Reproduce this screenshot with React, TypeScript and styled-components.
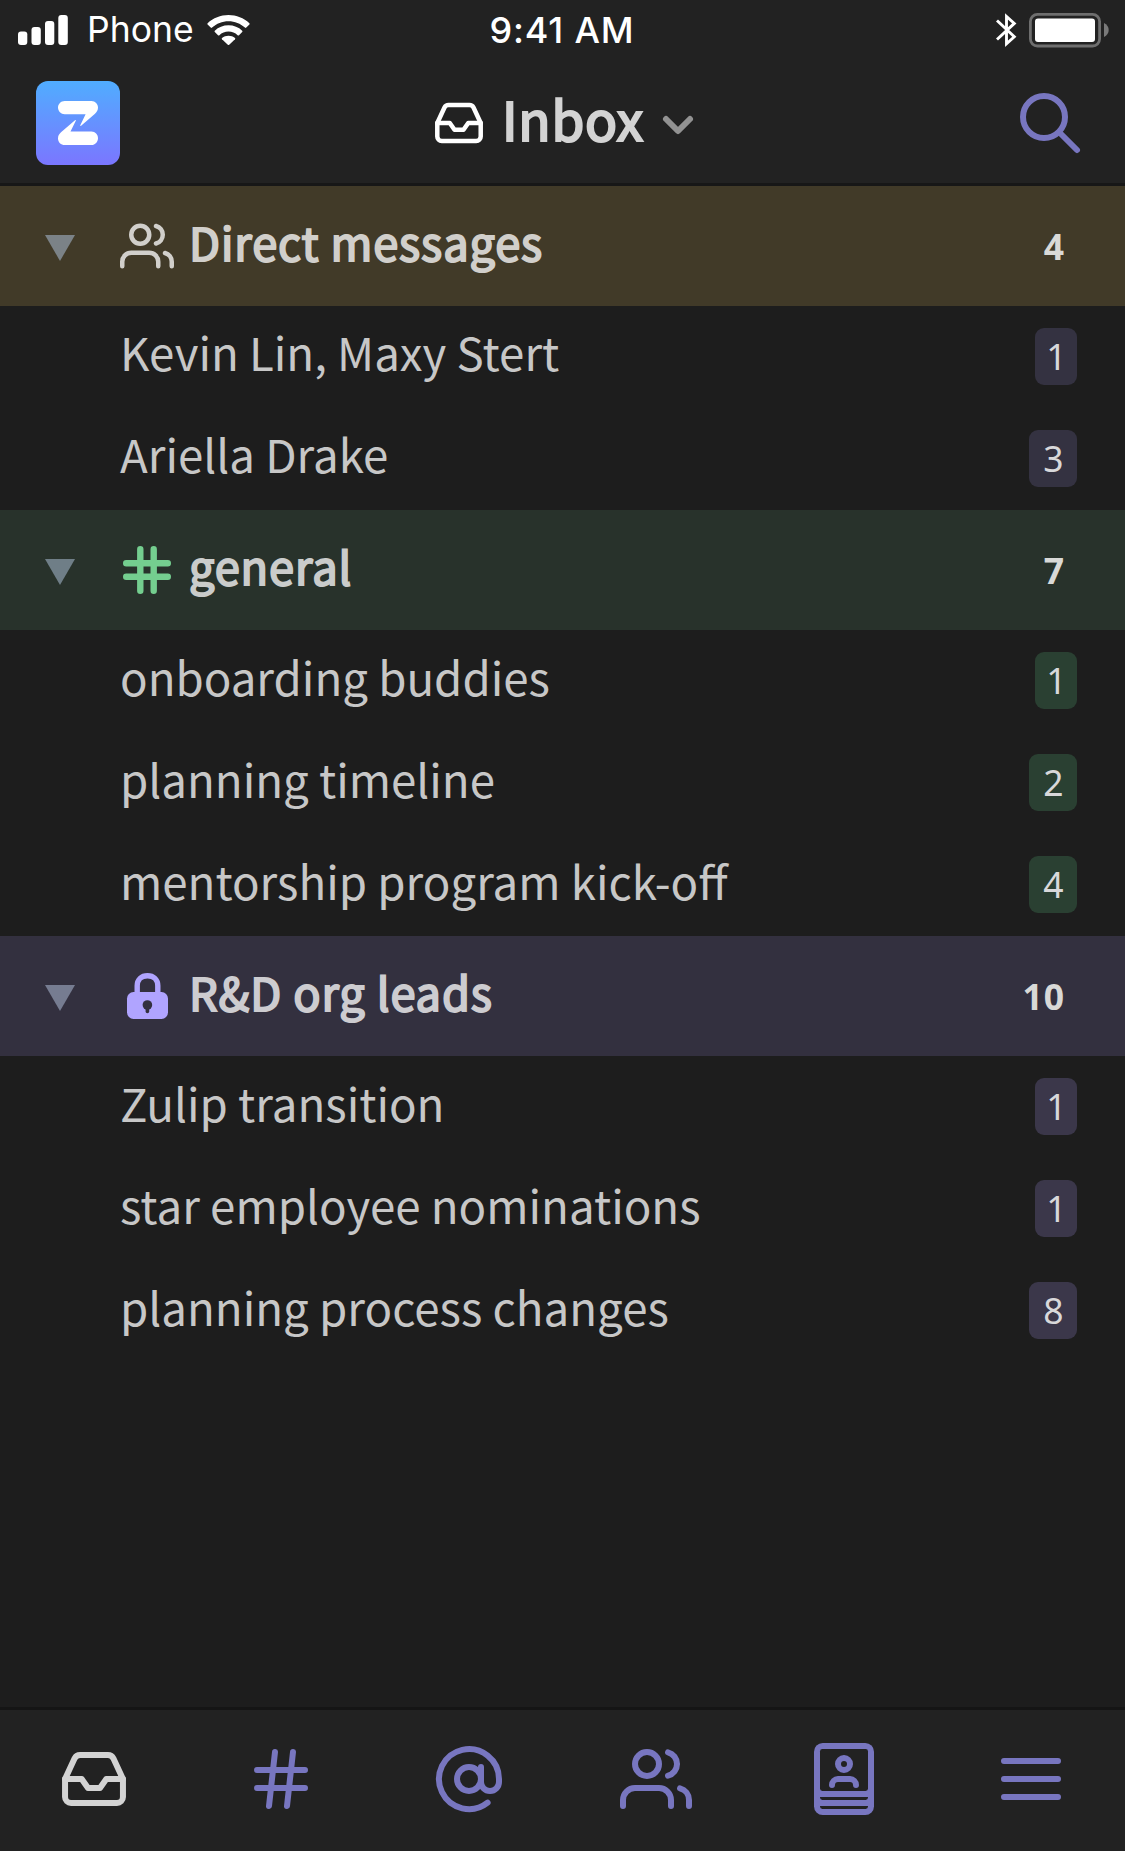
import React from 'react';
import styled, { createGlobalStyle } from 'styled-components';

const sans = `"Noto Sans CJK SC", "Noto Sans", sans-serif`;
const system = `Inter, Roboto, sans-serif`;
const accent = '#7876c0';

const GlobalStyle = createGlobalStyle`
  html, body { margin: 0; background: #1d1d1d; }
  *, *::before, *::after { box-sizing: border-box; }
  svg { display: block; flex: none; overflow: visible; }
`;

const Screen = styled.div`
  width: 1125px;
  height: 1851px;
  display: flex;
  flex-direction: column;
  overflow: hidden;
  background: #1d1d1d;
  color: #c7c7c7;
  font-family: ${sans};
`;

const TopBar = styled.header`
  height: 186px;
  flex: none;
  background: #222222;
  border-bottom: 3px solid #171717;
`;

const StatusBar = styled.div`
  height: 60px;
  display: grid;
  grid-template-columns: 1fr auto 1fr;
  align-items: center;
  padding: 0 16px 0 18px;
  color: #fff;
  font-family: ${system};
  font-size: 35.5px;
  line-height: 60px;
`;

const StatusGroup = styled.div<{ $end?: boolean }>`
  display: flex;
  align-items: center;
  justify-content: ${(p) => (p.$end ? 'flex-end' : 'flex-start')};
  gap: ${(p) => (p.$end ? '12px' : '0')};
`;

const Carrier = styled.span`
  margin: 0 13px 0 19px;
`;

const Clock = styled.span`
  padding-right: 3px;
  font-size: 36px;
  font-weight: 500;
  letter-spacing: 0.8px;
`;

const TitleBar = styled.div`
  height: 123px;
  display: grid;
  grid-template-columns: 1fr auto 1fr;
  align-items: center;
  padding: 3px 36px 0;
`;

const Title = styled.h1`
  display: flex;
  align-items: center;
  margin: 0;
  color: #d3d3d3;
`;

const TitleText = styled.span`
  margin: 0 19px 0 16px;
  padding-bottom: 11px;
  font-size: 53px;
  font-weight: 400;
  line-height: 70px;
  letter-spacing: 0.8px;
  -webkit-text-stroke: 2.2px currentColor;
`;

const TitleArrow = styled.span`
  padding-top: 4px;
`;

const SearchButton = styled.div`
  justify-self: end;
  margin-right: 9px;
`;

const Inbox = styled.main`
  flex: 1;
`;

const SectionHeader = styled.div<{ $bg: string }>`
  height: 120px;
  display: flex;
  align-items: center;
  padding: 0 60px 0 45px;
  background: ${(p) => p.$bg};
`;

const Toggle = styled.div`
  padding-top: 3px;
`;

const SectionIcon = styled.div`
  display: flex;
  justify-content: center;
  width: 54px;
  margin: 0 15px 0 45px;
`;

const SectionTitle = styled.h2<{ $color: string }>`
  flex: 1;
  margin: 0;
  padding-bottom: 9px;
  color: ${(p) => p.$color};
  font-size: 45.2px;
  font-weight: 400;
  line-height: 80px;
  letter-spacing: 0.88px;
  -webkit-text-stroke: 1.9px currentColor;
`;

const SectionCount = styled.span`
  color: #d9d9d7;
  font-family: "Noto Sans", sans-serif;
  font-size: 35.5px;
  font-weight: 700;
  line-height: 60px;
  letter-spacing: 1px;
`;

const Row = styled.div`
  height: 102px;
  display: flex;
  align-items: center;
  justify-content: space-between;
  padding: 0 48px 1px 120px;
`;

const Topic = styled.span<{ $raised?: boolean }>`
  padding-bottom: ${(p) => (p.$raised ? 11 : 9)}px;
  font-size: 45.65px;
  line-height: 80px;
  white-space: nowrap;
`;

const Badge = styled.span<{ $bg: string; $narrow: boolean }>`
  width: ${(p) => (p.$narrow ? 42 : 48)}px;
  height: 57px;
  padding-left: 1px;
  border-radius: 9px;
  background: ${(p) => p.$bg};
  color: #d8d8da;
  font-family: "Noto Sans", sans-serif;
  font-size: 35.5px;
  line-height: 57px;
  text-align: center;
`;

const TabBar = styled.nav`
  height: 144px;
  flex: none;
  display: grid;
  grid-template-columns: repeat(6, 1fr);
  place-items: center;
  padding-bottom: 3px;
  background: #222222;
  border-top: 3px solid #151515;
`;

const TabIcon = styled.svg.attrs({
  width: 72,
  height: 72,
  viewBox: '0 0 24 24',
  fill: 'none',
  strokeWidth: 2,
  strokeLinecap: 'round',
  strokeLinejoin: 'round',
})<{ $active?: boolean }>`
  stroke: ${(p) => (p.$active ? '#d3d3d3' : accent)};
`;

const Signal = () => (
  <svg width="50" height="30" viewBox="0 0 50 30" fill="#fff">
    <rect x="0" y="16.5" width="9.3" height="13.5" rx="3" />
    <rect x="13.5" y="12" width="9.3" height="18" rx="3" />
    <rect x="27" y="6" width="9.3" height="24" rx="3" />
    <rect x="40.3" y="0" width="9.5" height="30" rx="3" />
  </svg>
);

const Wifi = () => (
  <svg width="43" height="30" viewBox="0 0 43 30" fill="#fff">
    <path d="M21.5 0C13.500 0 6.200 3 .6 8.200Q0 8.900 .6 9.500L3.700 12.600Q4.400 13.200 5.100 12.600C9.500 8.500 15.200 6.200 21.500 6.200S33.500 8.500 37.900 12.600Q38.600 13.200 39.300 12.600L42.400 9.500Q43 8.900 42.400 8.200C36.800 3 29.500 0 21.500 0Z" />
    <path d="M21.500 10.300C16.200 10.300 11.400 12.300 7.800 15.700Q7.200 16.300 7.800 17L11 20.200Q11.700 20.800 12.400 20.200C14.800 17.900 18 16.600 21.500 16.600S28.200 17.900 30.600 20.200Q31.300 20.800 32 20.200L35.200 17Q35.800 16.300 35.200 15.700C31.600 12.300 26.800 10.300 21.500 10.300Z" />
    <path d="M21.500 20.700C19 20.700 16.800 21.600 15 23Q14.400 23.600 15 24.200L20.800 29.800Q21.500 30.300 22.200 29.800L28 24.200Q28.600 23.600 28 23C26.200 21.600 24 20.700 21.500 20.700Z" />
  </svg>
);

const Bluetooth = () => (
  <svg width="21" height="34" viewBox="0 0 21 34" fill="none" stroke="#fff" strokeWidth="2.9">
    <path d="M1 7.500 18.300 23.800 10.500 30.800V3.400L18.300 10.400 1 26.500" />
  </svg>
);

const Battery = () => (
  <svg width="80" height="34" viewBox="0 0 80 34">
    <rect x="1.400" y="1.400" width="69.200" height="31.600" rx="7" fill="none" stroke="#6e6e6e" strokeWidth="2.8" />
    <rect x="6" y="5.500" width="60" height="23.500" rx="3" fill="#fff" />
    <path d="M75 10C78 11.500 79.700 14 79.700 17S78 22.500 75 24Z" fill="#7a7a7a" />
  </svg>
);

const Logo = () => (
  <svg width="84" height="84" viewBox="0 0 84 84">
    <defs>
      <linearGradient id="logo" x1="0" y1="0" x2="0" y2="1">
        <stop offset="0" stopColor="#50adff" />
        <stop offset="1" stopColor="#7b76ff" />
      </linearGradient>
    </defs>
    <rect width="84" height="84" rx="12" fill="url(#logo)" />
    <path
      fill="#fff"
      d="M28.700 20H55.500C59.200 20 62 23 62 26.500C62 29.200 61 30.700 59 32.700L45.100 44.800C44.500 45.300 44 45 44.300 44.300L49.600 33.300H28.700C25 33.300 22 30.300 22 26.600S25 20 28.700 20ZM55.500 64H28.700C25 64 22 61 22 57.400C22 54.800 23 53.200 25 51.300L39 39.200C39.600 38.700 40.100 39.100 39.800 39.700L34.500 50.500H55.500C59.200 50.500 62 53.500 62 57.200S59.200 64 55.500 64Z"
    />
  </svg>
);

const InboxShapes = () => (
  <>
    <path d="M21.650 12H16.100L14 15H10L7.900 12H2.350" />
    <path d="M5.550 5.110 2.350 12v6a2 2 0 0 0 2 2h15.300a2 2 0 0 0 2-2v-6L18.450 5.110A2 2 0 0 0 16.660 4H7.340a2 2 0 0 0-1.790 1.110z" />
  </>
);

const UsersShapes = () => (
  <>
    <circle cx="9" cy="7" r="4" />
    <path d="M17 21v-2a4 4 0 0 0-4-4H5a4 4 0 0 0-4 4v2M23 21v-2a4 4 0 0 0-3-3.870M16 3.130a4 4 0 0 1 0 7.750" />
  </>
);

const TitleInboxIcon = () => (
  <svg width="54" height="54" viewBox="0 0 24 24" fill="none" stroke="#fff" strokeWidth="2" strokeLinecap="round" strokeLinejoin="round">
    <InboxShapes />
  </svg>
);

const Chevron = () => (
  <svg width="30" height="18" viewBox="0 0 30 18" fill="none" stroke="#929292" strokeWidth="6" strokeLinecap="round" strokeLinejoin="round">
    <path d="M3 3 15 15 27 3" />
  </svg>
);

const Search = () => (
  <svg width="60" height="60" viewBox="0 0 60 60" fill="none" stroke={accent} strokeWidth="6" strokeLinecap="round">
    <circle cx="24" cy="24" r="21" />
    <path d="M39.500 39.500 57 57" />
  </svg>
);

const Disclosure = ({ color }: { color: string }) => (
  <svg width="30" height="26" viewBox="0 0 30 26" fill={color}>
    <path d="M0 0H30L15 26Z" />
  </svg>
);

const PeopleIcon = () => (
  <svg width="54" height="54" viewBox="0 0 24 24" fill="none" stroke="#d1cfcb" strokeWidth="2" strokeLinecap="round" strokeLinejoin="round">
    <UsersShapes />
  </svg>
);

const ChannelIcon = () => (
  <svg width="48" height="48" viewBox="0 0 48 48" fill="none" stroke="#74ce8f" strokeWidth="6.400" strokeLinecap="round">
    <path d="M3.200 17.300H44.800M3.200 30.700H44.800M17.300 3.200V44.800M30.700 3.200V44.800" />
  </svg>
);

const LockIcon = () => (
  <svg width="41" height="46" viewBox="0 0 41 46">
    <path d="M10.200 22V12.800C10.200 6.600 14.500 2.700 20.500 2.700S30.800 6.600 30.800 12.800V22" fill="none" stroke="#b0a4ff" strokeWidth="5.400" />
    <rect y="19" width="41" height="27" rx="6.500" fill="#b0a4ff" />
    <circle cx="20.400" cy="32" r="4.800" fill="#33303f" />
    <path d="M20.400 33V38.500" stroke="#33303f" strokeWidth="3.600" strokeLinecap="round" />
  </svg>
);

type Section = {
  title: string;
  count: number;
  icon: React.ReactNode;
  bg: string;
  badge: string;
  text: string;
  arrow: string;
  raised?: boolean;
  items: [string, number][];
};

const sections: Section[] = [
  {
    title: 'Direct messages',
    count: 4,
    icon: <PeopleIcon />,
    bg: '#413a28',
    badge: '#343241',
    text: '#d1cfcb',
    arrow: '#7b8287',
    raised: true,
    items: [
      ['Kevin Lin, Maxy Stert', 1],
      ['Ariella Drake', 3],
    ],
  },
  {
    title: 'general',
    count: 7,
    icon: <ChannelIcon />,
    bg: '#28322b',
    badge: '#2a4032',
    text: '#cacccb',
    arrow: '#6f7e87',
    items: [
      ['onboarding buddies', 1],
      ['planning timeline', 2],
      ['mentorship program kick-off', 4],
    ],
  },
  {
    title: 'R&D org leads',
    count: 10,
    icon: <LockIcon />,
    bg: '#33303f',
    badge: '#3b374a',
    text: '#cdccd0',
    arrow: '#767c91',
    items: [
      ['Zulip transition', 1],
      ['star employee nominations', 1],
      ['planning process changes', 8],
    ],
  },
];

export default function App() {
  return (
    <Screen>
      <GlobalStyle />
      <TopBar>
        <StatusBar>
          <StatusGroup>
            <Signal />
            <Carrier>Phone</Carrier>
            <Wifi />
          </StatusGroup>
          <Clock>9:41 AM</Clock>
          <StatusGroup $end>
            <Bluetooth />
            <Battery />
          </StatusGroup>
        </StatusBar>
        <TitleBar>
          <Logo />
          <Title>
            <TitleInboxIcon />
            <TitleText>Inbox</TitleText>
            <TitleArrow>
              <Chevron />
            </TitleArrow>
          </Title>
          <SearchButton>
            <Search />
          </SearchButton>
        </TitleBar>
      </TopBar>

      <Inbox>
        {sections.map((s) => (
          <section key={s.title}>
            <SectionHeader $bg={s.bg}>
              <Toggle>
                <Disclosure color={s.arrow} />
              </Toggle>
              <SectionIcon>{s.icon}</SectionIcon>
              <SectionTitle $color={s.text}>{s.title}</SectionTitle>
              <SectionCount>{s.count}</SectionCount>
            </SectionHeader>
            {s.items.map(([topic, unread]) => (
              <Row key={topic}>
                <Topic $raised={s.raised}>{topic}</Topic>
                <Badge $bg={s.badge} $narrow={unread === 1}>
                  {unread}
                </Badge>
              </Row>
            ))}
          </section>
        ))}
      </Inbox>

      <TabBar>
        <TabIcon $active>
          <InboxShapes />
        </TabIcon>
        <TabIcon>
          <path d="M4 9H20M4 15H20M10 3 8 21M16 3 14 21" />
        </TabIcon>
        <TabIcon>
          <circle cx="12" cy="12" r="4" />
          <path d="M16 8v5a3 3 0 0 0 6 0v-1a10 10 0 1 0-3.800 7.880" />
        </TabIcon>
        <TabIcon>
          <UsersShapes />
        </TabIcon>
        <TabIcon>
          <rect x="2" y="0" width="20" height="24" rx="2.900" fill={accent} stroke="none" />
          <rect x="4" y="2" width="16" height="14" rx="0.800" fill="#222222" stroke="none" />
          <path d="M4 18H20V18.200a.8.800 0 0 1-.8.800H4.800a.8.800 0 0 1-.8-.8ZM4 21H20V21.200a.8.800 0 0 1-.8.800H4.800a.8.800 0 0 1-.8-.8Z" fill="#222222" stroke="none" />
          <circle cx="12" cy="7" r="2" />
          <path d="M8 14a2 2 0 0 1 2-2h4a2 2 0 0 1 2 2" />
        </TabIcon>
        <TabIcon>
          <path d="M3 6H21M3 12H21M3 18H21" />
        </TabIcon>
      </TabBar>
    </Screen>
  );
}
